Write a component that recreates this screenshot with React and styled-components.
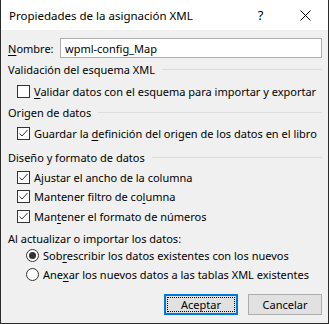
import React from "react";
import styled, { createGlobalStyle } from "styled-components";

const Global = createGlobalStyle`
  html, body { margin: 0; padding: 0; background: #f0f0f0; }
  body { font-family: "Noto Sans", "Open Sans", sans-serif; font-size: 11px; color: #000; }
  * { box-sizing: border-box; }
`;

const Window = styled.div`
  width: 329px;
  height: 324px;
  background: #f0f0f0;
  border: 1px solid #2b2b2b;
  border-top: none;
  display: flex;
  flex-direction: column;
`;

const TitleBar = styled.div`
  height: 30px;
  background: #fff;
  display: flex;
  align-items: center;
  padding-left: 8px;
`;

const TitleText = styled.div`
  flex: 1;
  font-size: 11.5px;
`;

const TitleButton = styled.div`
  width: 45px;
  height: 30px;
  display: flex;
  align-items: center;
  justify-content: center;
  font-size: 13px;
  color: #000;
`;

const Body = styled.div`
  padding: 0 6px 0 6px;
  display: flex;
  flex-direction: column;
`;

const NameRow = styled.div`
  display: flex;
  align-items: center;
  margin-top: 8px;
  height: 20px;
`;

const NameLabel = styled.div`
  width: 53px;
  padding-left: 1px;
`;

const Input = styled.div`
  flex: 1;
  height: 20px;
  border: 1px solid #acacac;
  background: #fff;
  padding-left: 4px;
  display: flex;
  align-items: center;
`;

const Heading = styled.div`
  display: flex;
  align-items: center;
  height: 16px;
  margin-top: ${(p) => p.$mt}px;
  padding-left: 1px;
  white-space: nowrap;
  &::after {
    content: "";
    flex: 1;
    height: 1px;
    background: ${(p) => (p.$line ? "#dcdcdc" : "transparent")};
    margin-left: 7px;
  }
`;

const OptionRow = styled.div`
  display: flex;
  align-items: center;
  height: ${(p) => p.$h || 20}px;
  margin-top: ${(p) => p.$mt || 0}px;
  padding-left: ${(p) => p.$indent}px;
  gap: 4px;
  white-space: nowrap;
`;

const Box = styled.div`
  width: 13px;
  height: 13px;
  border: 1px solid #333;
  background: #fff;
  display: flex;
  align-items: center;
  justify-content: center;
  flex: none;
`;

const Circle = styled.div`
  width: 13px;
  height: 13px;
  border: 1px solid #333;
  border-radius: 50%;
  background: #fff;
  display: flex;
  align-items: center;
  justify-content: center;
  flex: none;
  &::after {
    content: "";
    width: 7px;
    height: 7px;
    border-radius: 50%;
    background: ${(p) => (p.$on ? "#333" : "transparent")};
  }
`;

const U = styled.span`
  text-decoration: underline;
  text-underline-offset: 2px;
`;

const Buttons = styled.div`
  display: flex;
  justify-content: flex-end;
  gap: 10px;
  margin-top: 10px;
`;

const Button = styled.div`
  width: 74px;
  height: 21px;
  background: #e1e1e1;
  border: ${(p) => (p.$primary ? "2px solid #0078d7" : "1px solid #adadad")};
  display: flex;
  align-items: center;
  justify-content: center;
  position: relative;
`;

const Focus = styled.div`
  position: absolute;
  inset: 1px;
  border: 1px dotted #000;
`;

const Check = () => (
  <svg width="11" height="11" viewBox="0 0 11 11">
    <polyline points="1.5,5.5 4,8 9.5,2" fill="none" stroke="#333" strokeWidth="1" />
  </svg>
);

const CheckOption = ({ checked, children, mt, h }) => (
  <OptionRow $indent={10} $mt={mt} $h={h}>
    <Box>{checked && <Check />}</Box>
    <span>{children}</span>
  </OptionRow>
);

const RadioOption = ({ on, children, mt, h }) => (
  <OptionRow $indent={19} $mt={mt} $h={h}>
    <Circle $on={on} />
    <span>{children}</span>
  </OptionRow>
);

export default function App() {
  return (
    <>
      <Global />
      <Window>
        <TitleBar>
          <TitleText>Propiedades de la asignación XML</TitleText>
          <TitleButton>?</TitleButton>
          <TitleButton>
            <svg width="11" height="11" viewBox="0 0 11 11">
              <path d="M0.5 0.5 L10.5 10.5 M10.5 0.5 L0.5 10.5" stroke="#000" strokeWidth="1" />
            </svg>
          </TitleButton>
        </TitleBar>
        <Body>
          <NameRow>
            <NameLabel><U>N</U>ombre:</NameLabel>
            <Input>wpml-config_Map</Input>
          </NameRow>
          <Heading $mt={3} $line>Validación del esquema XML</Heading>
          <CheckOption mt={4}><U>V</U>alidar datos con el esquema para importar y exportar</CheckOption>
          <Heading $mt={3} $line>Origen de datos</Heading>
          <CheckOption mt={3} checked>Guardar la <U>d</U>efinición del origen de los datos en el libro</CheckOption>
          <Heading $mt={6} $line>Diseño y formato de datos</Heading>
          <CheckOption mt={2} checked>A<U>j</U>ustar el ancho de la columna</CheckOption>
          <CheckOption checked h={19}>Mantener filtro de co<U>l</U>umna</CheckOption>
          <CheckOption checked>Man<U>t</U>ener el formato de números</CheckOption>
          <Heading $mt={4}>Al actualizar o importar los datos:</Heading>
          <RadioOption on h={18} mt={0}>Sob<U>r</U>escribir los datos existentes con los nuevos</RadioOption>
          <RadioOption h={20}>Ane<U>x</U>ar los nuevos datos a las tablas XML existentes</RadioOption>
          <Buttons>
            <Button $primary><Focus />Aceptar</Button>
            <Button>Cancelar</Button>
          </Buttons>
        </Body>
      </Window>
    </>
  );
}
